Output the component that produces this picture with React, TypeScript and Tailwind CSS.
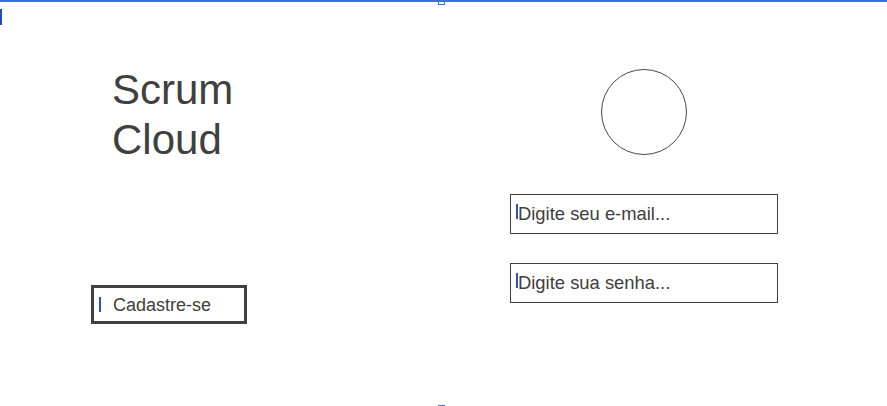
export default function App() {
  return (
    <div
      className="relative h-[406px] w-full overflow-hidden border-t-2 border-[#3b6ee0] bg-white text-[#404040]"
      style={{ fontFamily: '"Liberation Sans", Arial, sans-serif' }}
    >
      {/* selection handles / caret of the editor canvas */}
      <div className="absolute left-[438px] top-[-2px] h-[5px] w-[7px] border border-[#3b6ee0] bg-white" />
      <div className="absolute left-0 top-[7px] h-[16px] w-[2px] bg-[#1f4fbf]" />
      <div className="absolute bottom-0 left-[438px] h-[1px] w-[7px] bg-[#3b6ee0]" />

      <div className="flex">
        {/* left side */}
        <div className="flex w-[510px] flex-col pl-[91px] pt-[63px]">
          <h1 className="ml-[21px] text-[42px] font-normal leading-[50px]">
            Scrum
            <br />
            Cloud
          </h1>
          <div className="mt-[120px] flex h-[39px] w-[156px] items-center border-[3px] border-[#404040] pl-[5px]">
            <span className="mr-[12px] h-[15px] w-[2px] bg-[#2a52be]" />
            <span className="text-[18px] leading-none">Cadastre-se</span>
          </div>
        </div>

        {/* right side */}
        <div className="flex w-[268px] flex-col items-center pt-[67px]">
          <div className="h-[86px] w-[86px] rounded-full border border-[#4a4a4a]" />
          <div className="mt-[39px] flex w-full flex-col gap-[29px]">
            <Field placeholder="Digite seu e-mail..." />
            <Field placeholder="Digite sua senha..." />
          </div>
        </div>
      </div>
    </div>
  )
}

function Field({ placeholder }: { placeholder: string }) {
  return (
    <div className="flex h-[40px] w-full items-center border border-[#404040] pl-[5px]">
      <span className="mb-[5px] h-[15px] w-[2px] self-center bg-[#2a52be]" />
      <span className="text-[18.4px] leading-none">{placeholder}</span>
    </div>
  )
}
